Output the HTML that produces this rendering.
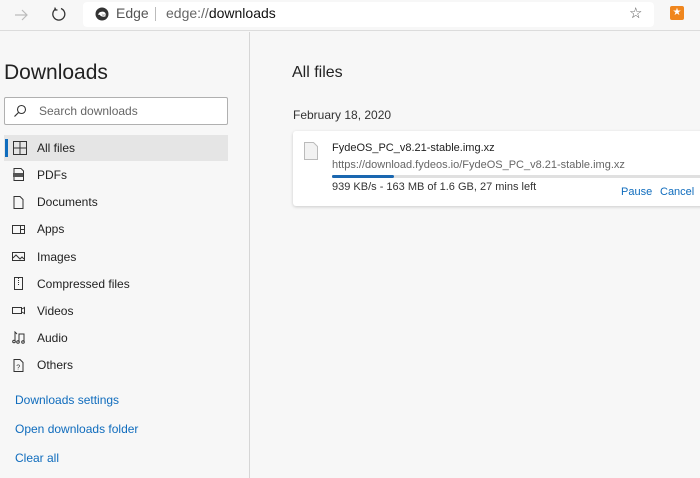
<!DOCTYPE html>
<html><head><style>
*{margin:0;padding:0;box-sizing:border-box}
body{width:700px;height:478px;overflow:hidden;background:#f7f7f7;font-family:"Segoe UI","Liberation Sans",sans-serif;color:#222;position:relative}
.abs{position:absolute}
.tb{left:0;top:0;width:700px;height:31px;background:#f7f7f7;border-bottom:1px solid #dcdcdc}
.addr{left:83px;top:2px;width:571px;height:25px;background:#fff;border-radius:4px}
.side{left:0;top:32px;width:250px;height:446px;border-right:1px solid #d6d6d6}
.nav{position:absolute;left:37px;font-size:12px;color:#222}
.ic{position:absolute;left:12px;width:13px;height:13px}
.lnk{position:absolute;left:15px;font-size:12px;color:#0f6cbd}
</style></head><body>
<div class="abs tb"></div>
<svg class="abs" style="left:12px;top:6px" width="18" height="18" viewBox="0 0 18 18"><path d="M3 9h12M10 4l5 5-5 5" stroke="#bbb" stroke-width="1.2" fill="none"/></svg>
<svg class="abs" style="left:51px;top:6px" width="16" height="16" viewBox="0 0 16 16"><path d="M5 2.8A6 6 0 1 0 10 2.5" stroke="#333" stroke-width="1.3" fill="none"/><path d="M4 1.5v2.5h2.5" stroke="#333" stroke-width="1.2" fill="none"/></svg>
<div class="abs addr"></div>
<svg class="abs" style="left:95px;top:7px" width="14" height="14" viewBox="0 0 14 14"><circle cx="7" cy="7" r="6.5" fill="#333"/><path d="M4 8c0-3 5-3.5 6-1H5.5c0 2 3 2.5 5 1.5" stroke="#fff" stroke-width="1.4" fill="none"/></svg>
<div class="abs" style="left:116px;top:5px;font-size:14px;color:#555">Edge</div>
<div class="abs" style="left:155px;top:7px;width:1px;height:14px;background:#bbb"></div>
<div class="abs" style="left:166px;top:5px;font-size:14px;color:#666">edge://<span style="color:#111">downloads</span></div>
<div class="abs" style="left:629px;top:4px;font-size:15px;color:#555">☆</div>
<div class="abs" style="left:670px;top:6px;width:14px;height:14px;background:#f0861d;border-radius:2px;color:#fff;font-size:10px;text-align:center;line-height:14px">★</div>
<div class="abs side"></div>
<div class="abs" style="left:4px;top:61px;font-size:21px;color:#222">Downloads</div>
<div class="abs" style="left:4px;top:97px;width:224px;height:28px;background:#fff;border:1px solid #b0b0b0;border-radius:2px"></div>
<svg class="abs" style="left:13px;top:104px" width="14" height="14" viewBox="0 0 14 14"><circle cx="8.5" cy="5.5" r="4" stroke="#333" fill="none" stroke-width="1.1"/><path d="M5.5 8.5L1.5 12.5" stroke="#333" stroke-width="1.2"/></svg>
<div class="abs" style="left:39px;top:104px;font-size:12px;color:#666">Search downloads</div>
<div class="abs" style="left:4px;top:135px;width:224px;height:26px;background:#e5e5e5"></div>
<div class="abs" style="left:5px;top:139px;width:3px;height:18px;background:#0f6cbd"></div>
<svg class="abs" style="left:13px;top:141px" width="14" height="14" viewBox="0 0 14 14"><rect x=".5" y=".5" width="13" height="13" stroke="#333" fill="none"/><path d="M7 0v14M0 7h14" stroke="#333"/></svg>
<div class="nav" style="top:141px">All files</div>
<svg class="ic" style="top:168px" viewBox="0 0 13 13"><path d="M2 .5h7l2.5 2.5v9.5H2z" stroke="#333" fill="none"/><rect x="1" y="5" width="10" height="4" fill="#555"/></svg>
<div class="nav" style="top:168px">PDFs</div>
<svg class="ic" style="top:196px" viewBox="0 0 13 13"><path d="M2 .5h6l3 3v9H2z" stroke="#333" fill="none"/></svg>
<div class="nav" style="top:195px">Documents</div>
<svg class="ic" style="top:223px" viewBox="0 0 13 13"><rect x=".5" y="2.5" width="12" height="8" stroke="#333" fill="none"/><path d="M8.5 2.5v8M8.5 6.5h4" stroke="#333"/></svg>
<div class="nav" style="top:222px">Apps</div>
<svg class="ic" style="top:250px" viewBox="0 0 13 13"><rect x=".5" y="2.5" width="12" height="8" stroke="#333" fill="none"/><path d="M1 8l3-3 4 4 2-2 2 2" stroke="#333" fill="none"/></svg>
<div class="nav" style="top:250px">Images</div>
<svg class="ic" style="top:277px" viewBox="0 0 13 13"><rect x="2.5" y=".5" width="8" height="12" stroke="#333" fill="none"/><path d="M6.5 1v7" stroke="#333" stroke-dasharray="1 1"/></svg>
<div class="nav" style="top:277px">Compressed files</div>
<svg class="ic" style="top:304px" viewBox="0 0 13 13"><rect x=".5" y="3.5" width="9" height="6" stroke="#333" fill="none"/><path d="M10 5l2.5-1.5v6L10 8" stroke="#333" fill="none"/></svg>
<div class="nav" style="top:304px">Videos</div>
<svg class="ic" style="top:331px" viewBox="0 0 13 13"><path d="M3 10V1l2 2M7 11V3h5v8" stroke="#333" fill="none"/><circle cx="2" cy="10.5" r="1.3" stroke="#333" fill="none"/><circle cx="6" cy="11" r="1.3" stroke="#333" fill="none"/><circle cx="11" cy="11" r="1.3" stroke="#333" fill="none"/></svg>
<div class="nav" style="top:331px">Audio</div>
<svg class="ic" style="top:359px" viewBox="0 0 13 13"><path d="M2 .5h6l3 3v9H2z" stroke="#333" fill="none"/><text x="4.2" y="10.5" font-size="7" font-family="Liberation Sans" fill="#333">?</text></svg>
<div class="nav" style="top:358px">Others</div>
<div class="lnk" style="top:393px">Downloads settings</div>
<div class="lnk" style="top:422px">Open downloads folder</div>
<div class="lnk" style="top:451px">Clear all</div>
<div class="abs" style="left:292px;top:64px;font-size:16px;color:#222">All files</div>
<div class="abs" style="left:293px;top:108px;font-size:12px;color:#333">February 18, 2020</div>
<div class="abs" style="left:293px;top:131px;width:420px;height:75px;background:#fff;border-radius:3px;box-shadow:0 1px 3px rgba(0,0,0,.18)"></div>
<svg class="abs" style="left:304px;top:142px" width="14" height="18" viewBox="0 0 14 18"><path d="M.5.5h9l4 4v13H.5z" stroke="#bbb" fill="#f2f2f2"/></svg>
<div class="abs" style="left:332px;top:142px;font-size:11px;color:#222">FydeOS_PC_v8.21-stable.img.xz</div>
<div class="abs" style="left:332px;top:159px;font-size:11px;color:#666">https://download.fydeos.io/FydeOS_PC_v8.21-stable.img.xz</div>
<div class="abs" style="left:332px;top:175px;width:368px;height:3px;background:#e0e0e0"></div>
<div class="abs" style="left:332px;top:175px;width:62px;height:3px;background:#1a67b0;border-radius:2px"></div>
<div class="abs" style="left:332px;top:181px;font-size:11px;color:#333">939 KB/s - 163 MB of 1.6 GB, 27 mins left</div>
<div class="abs" style="left:621px;top:186px;font-size:11px;color:#0f6cbd">Pause</div>
<div class="abs" style="left:660px;top:186px;font-size:11px;color:#0f6cbd">Cancel</div>
</body></html>
